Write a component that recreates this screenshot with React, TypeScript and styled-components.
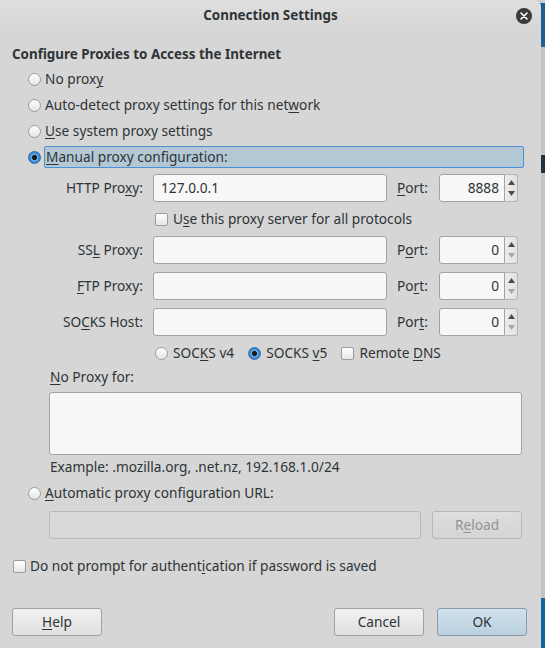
import React from "react";
import styled, { createGlobalStyle, css } from "styled-components";

const GlobalStyle = createGlobalStyle`
  html, body { margin: 0; padding: 0; }
  body {
    width: 545px;
    height: 648px;
    overflow: hidden;
    background: linear-gradient(
      to bottom,
      #cfcfcf 0px, #cfcfcf 3px,
      #1d5f92 3px, #1d5f92 47px,
      #c4c4c4 47px, #c4c4c4 155px,
      #22323d 155px, #22323d 173px,
      #c4c4c4 173px, #c4c4c4 598px,
      #16639f 598px
    );
    font-family: "Noto Sans", "DejaVu Sans", sans-serif;
    font-size: 13.7px;
    color: #2e3436;
  }
`;

const Dialog = styled.div`
  width: 541px;
  height: 648px;
  background: #d6d6d6;
  border-top-right-radius: 7px;
  display: flex;
  flex-direction: column;
  box-sizing: border-box;
  overflow: hidden;
`;

const TitleBar = styled.div`
  height: 30px;
  flex: none;
  display: grid;
  grid-template-columns: 1fr auto 1fr;
  align-items: center;
  background: linear-gradient(#dfdfdf, #d6d6d6);
`;

const Title = styled.div`
  grid-column: 2;
  font-weight: 700;
  font-size: 13.4px;
  line-height: 20px;
`;

const CloseButton = styled.div`
  grid-column: 3;
  justify-self: end;
  margin-right: 9px;
  margin-top: 1px;
  width: 16px;
  height: 16px;
  border-radius: 50%;
  background: #3a3a3a;
  display: flex;
  align-items: center;
  justify-content: center;
`;

const Body = styled.div`
  flex: 1;
  display: flex;
  flex-direction: column;
  padding: 0 17px 12px 12px;
`;

const Heading = styled.div`
  margin-top: 14px;
  font-weight: 700;
  font-size: 13.4px;
  line-height: 20px;
`;

const OptionList = styled.div<{ $top?: number }>`
  margin-top: ${(p) => p.$top ?? 2}px;
  padding-left: 16px;
  display: flex;
  flex-direction: column;
`;

const OptionRow = styled.label<{ $h?: number }>`
  display: flex;
  align-items: center;
  gap: 4px;
  height: ${(p) => p.$h ?? 26}px;
  line-height: 18px;
`;

const FocusBox = styled.span`
  flex: 1;
  height: 22px;
  box-sizing: border-box;
  margin-left: -1px;
  padding-left: 1px;
  border: 1px solid #4a90d9;
  border-radius: 2px;
  background: #b3c8d4;
  display: flex;
  align-items: center;
`;

const Key = styled.span`
  text-decoration: underline;
  text-underline-offset: 2px;
  text-decoration-thickness: 1px;
`;

const RadioDot = styled.span<{ $checked?: boolean }>`
  width: 13px;
  height: 13px;
  flex: none;
  box-sizing: border-box;
  border-radius: 50%;
  border: 1px solid #9b9b9b;
  background: linear-gradient(#ffffff, #e4e4e4);
  ${(p) =>
    p.$checked &&
    css`
      border-color: #2a6eb5;
      background: radial-gradient(
        circle,
        #1c1c1c 0 2.2px,
        #6aaae8 2.9px 3.6px,
        #3b87d6 4.2px
      );
    `}
`;

const CheckBox = styled.span`
  width: 13px;
  height: 13px;
  flex: none;
  box-sizing: border-box;
  border-radius: 2px;
  border: 1px solid #9b9b9b;
  background: linear-gradient(#ffffff, #e6e6e6);
`;

const ProxyGrid = styled.div`
  margin-top: 4px;
  margin-left: 37px;
  display: grid;
  grid-template-columns: 94px 234px 32px 79px;
  column-gap: 10px;
  row-gap: 8px;
  align-items: center;
`;

const FieldLabel = styled.span<{ $end?: boolean }>`
  justify-self: ${(p) => (p.$end ? "end" : "start")};
  white-space: nowrap;
  line-height: 18px;
`;

const TextField = styled.div<{ $disabled?: boolean }>`
  height: 28px;
  box-sizing: border-box;
  border: 1px solid #a3a3a3;
  border-radius: 3px;
  background: #f8f8f8;
  padding: 0 7px;
  display: flex;
  align-items: center;
  line-height: 18px;
  ${(p) =>
    p.$disabled &&
    css`
      background: #d9d9d9;
      border-color: #b9b9b9;
    `}
`;

const Spin = styled.div`
  display: flex;
  height: 28px;
`;

const SpinField = styled.div`
  flex: 1;
  box-sizing: border-box;
  border: 1px solid #a3a3a3;
  border-radius: 3px 0 0 3px;
  background: #f8f8f8;
  display: flex;
  align-items: center;
  justify-content: flex-end;
  padding-right: 5px;
  line-height: 18px;
`;

const SpinButtons = styled.div`
  width: 13px;
  box-sizing: border-box;
  border: 1px solid #b3b3b3;
  border-left: none;
  border-radius: 0 3px 3px 0;
  background: linear-gradient(to right, #ececec, #e2e2e2);
  display: flex;
  flex-direction: column;
  justify-content: space-between;
  align-items: center;
  padding: 5px 0 5px;
`;

const WideRow = styled.div<{ $gap?: number }>`
  grid-column: 2 / 5;
  padding-left: 2px;
  height: 18px;
  display: flex;
  align-items: center;
  gap: ${(p) => p.$gap ?? 0}px;
  line-height: 18px;
`;

const Choice = styled.label`
  display: flex;
  align-items: center;
  gap: 5px;
`;

const Section = styled.div`
  margin-left: 37px;
  display: flex;
  flex-direction: column;
`;

const TextLine = styled.div<{ $top?: number }>`
  margin-top: ${(p) => p.$top ?? 0}px;
  padding-left: 1px;
  line-height: 18px;
`;

const TextArea = styled.div`
  margin-top: 6px;
  width: 473px;
  height: 63px;
  box-sizing: border-box;
  border: 1px solid #a3a3a3;
  border-radius: 3px;
  background: #f8f8f8;
`;

const UrlRow = styled.div`
  margin-top: 7px;
  margin-left: 37px;
  display: grid;
  grid-template-columns: 372px 90px;
  column-gap: 11px;
`;

const Button = styled.div<{ $primary?: boolean; $disabled?: boolean }>`
  width: 90px;
  height: 28px;
  box-sizing: border-box;
  border: 1px solid #a2a2a2;
  border-radius: 3px;
  background: linear-gradient(#f1f1f1, #e0e0e0);
  display: flex;
  align-items: center;
  justify-content: center;
  line-height: 18px;
  ${(p) =>
    p.$primary &&
    css`
      border-color: #8a9aa8;
      background: linear-gradient(#d2e2ee, #b9cfdf);
    `}
  ${(p) =>
    p.$disabled &&
    css`
      border-color: #b8b8b8;
      background: linear-gradient(#dedede, #d4d4d4);
      color: #919495;
    `}
`;

const BottomCheck = styled.label`
  margin-top: 18px;
  margin-left: 1px;
  display: flex;
  align-items: center;
  gap: 4px;
  line-height: 18px;
`;

const Footer = styled.div`
  margin-top: auto;
  margin-right: -3px;
  display: flex;
  align-items: center;
  gap: 13px;
`;

const Spacer = styled.div`
  flex: 1;
`;

const Arrow = ({ up, dim }: { up?: boolean; dim?: boolean }) => (
  <svg width="7" height="5" viewBox="0 0 7 5">
    <polygon
      points={up ? "3.5,0 7,5 0,5" : "0,0 7,0 3.5,5"}
      fill={dim ? "#a6a6a6" : "#4a4a4a"}
    />
  </svg>
);

const PortSpin = ({ value, downDim }: { value: string; downDim?: boolean }) => (
  <Spin>
    <SpinField>{value}</SpinField>
    <SpinButtons>
      <Arrow up />
      <Arrow dim={downDim} />
    </SpinButtons>
  </Spin>
);

type ProxyRowProps = {
  label: React.ReactNode;
  port: React.ReactNode;
  value?: string;
  portValue: string;
  downDim?: boolean;
};

const ProxyRow = ({ label, port, value, portValue, downDim }: ProxyRowProps) => (
  <>
    <FieldLabel $end>{label}</FieldLabel>
    <TextField>{value}</TextField>
    <FieldLabel>{port}</FieldLabel>
    <PortSpin value={portValue} downDim={downDim} />
  </>
);

export default function App() {
  return (
    <>
      <GlobalStyle />
      <Dialog>
        <TitleBar>
          <Title>Connection Settings</Title>
          <CloseButton>
            <svg width="8" height="8" viewBox="0 0 8 8">
              <path d="M1 1L7 7M7 1L1 7" stroke="#ffffff" strokeWidth="1.6" strokeLinecap="round" />
            </svg>
          </CloseButton>
        </TitleBar>
        <Body>
          <Heading>Configure Proxies to Access the Internet</Heading>
          <OptionList>
            <OptionRow>
              <RadioDot />
              <span>
                No prox<Key>y</Key>
              </span>
            </OptionRow>
            <OptionRow>
              <RadioDot />
              <span>
                Auto-detect proxy settings for this net<Key>w</Key>ork
              </span>
            </OptionRow>
            <OptionRow>
              <RadioDot />
              <span>
                <Key>U</Key>se system proxy settings
              </span>
            </OptionRow>
            <OptionRow>
              <RadioDot $checked />
              <FocusBox>
                <span>
                  <Key>M</Key>anual proxy configuration:
                </span>
              </FocusBox>
            </OptionRow>
          </OptionList>

          <ProxyGrid>
            <ProxyRow
              label={<>HTTP Pro<Key>x</Key>y:</>}
              port={<><Key>P</Key>ort:</>}
              value="127.0.0.1"
              portValue="8888"
            />
            <WideRow>
              <Choice>
                <CheckBox />
                <span>
                  U<Key>s</Key>e this proxy server for all protocols
                </span>
              </Choice>
            </WideRow>
            <ProxyRow
              label={<>SS<Key>L</Key> Proxy:</>}
              port={<>P<Key>o</Key>rt:</>}
              portValue="0"
              downDim
            />
            <ProxyRow
              label={<><Key>F</Key>TP Proxy:</>}
              port={<>Po<Key>r</Key>t:</>}
              portValue="0"
              downDim
            />
            <ProxyRow
              label={<>SO<Key>C</Key>KS Host:</>}
              port={<>Por<Key>t</Key>:</>}
              portValue="0"
              downDim
            />
            <WideRow $gap={14}>
              <Choice>
                <RadioDot />
                <span>
                  SOC<Key>K</Key>S v4
                </span>
              </Choice>
              <Choice>
                <RadioDot $checked />
                <span>
                  SOCKS <Key>v</Key>5
                </span>
              </Choice>
              <Choice>
                <CheckBox />
                <span>
                  Remote <Key>D</Key>NS
                </span>
              </Choice>
            </WideRow>
          </ProxyGrid>

          <Section>
            <TextLine $top={6}>
              <Key>N</Key>o Proxy for:
            </TextLine>
            <TextArea />
            <TextLine $top={3}>Example: .mozilla.org, .net.nz, 192.168.1.0/24</TextLine>
          </Section>

          <OptionList $top={6}>
            <OptionRow $h={22}>
              <RadioDot />
              <span>
                <Key>A</Key>utomatic proxy configuration URL:
              </span>
            </OptionRow>
          </OptionList>

          <UrlRow>
            <TextField $disabled />
            <Button $disabled>
              R<Key>e</Key>load
            </Button>
          </UrlRow>

          <BottomCheck>
            <CheckBox />
            <span>
              Do not prompt for authent<Key>i</Key>cation if password is saved
            </span>
          </BottomCheck>

          <Footer>
            <Button>
              <Key>H</Key>elp
            </Button>
            <Spacer />
            <Button>Cancel</Button>
            <Button $primary>OK</Button>
          </Footer>
        </Body>
      </Dialog>
    </>
  );
}
